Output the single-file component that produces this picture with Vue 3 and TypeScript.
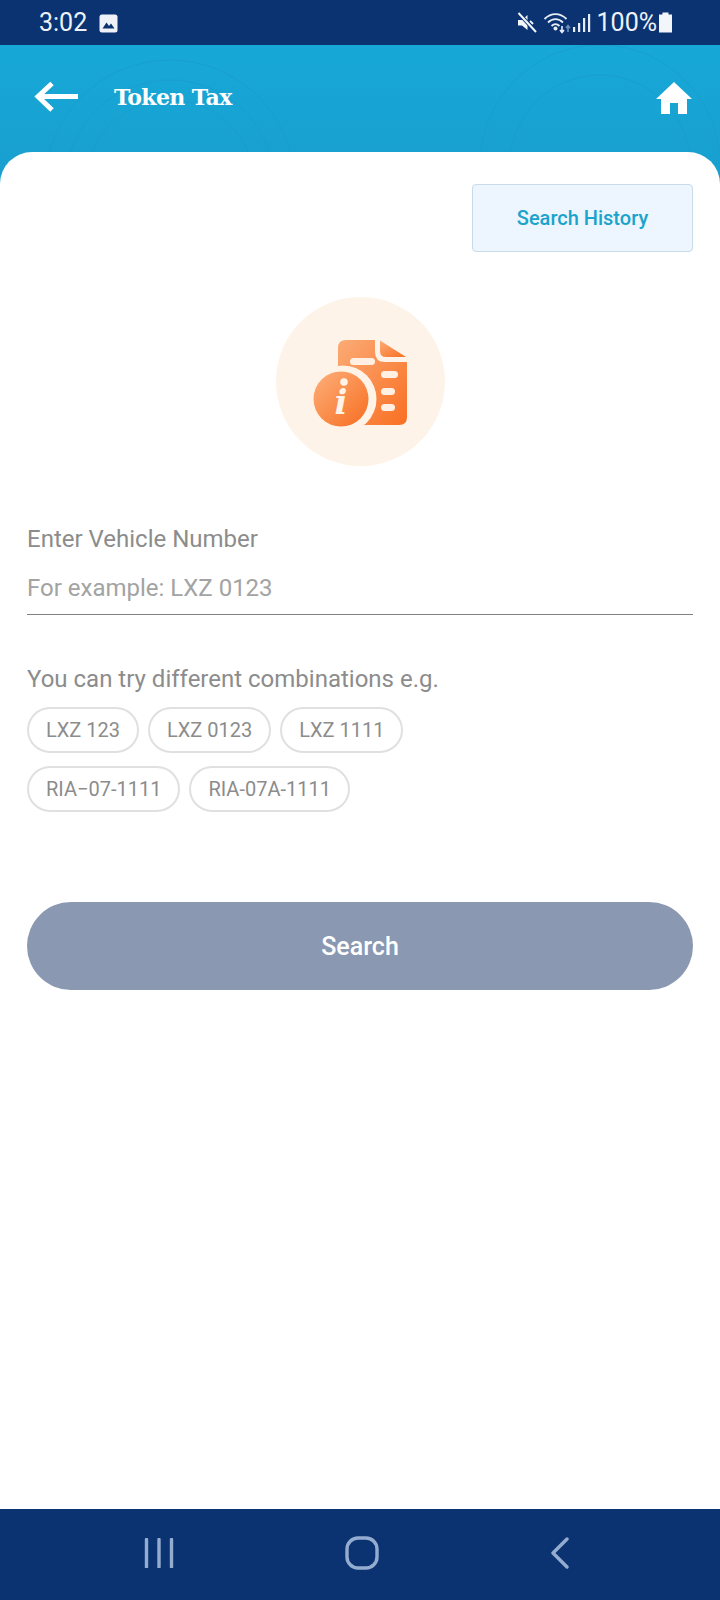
<script setup lang="ts">
const chipRows: string[][] = [
  ['LXZ 123', 'LXZ 0123', 'LXZ 1111'],
  ['RIA−07-1111', 'RIA-07A-1111'],
]
</script>

<template>
  <div class="screen">
    <div class="status">
      <div class="status-left">
        <span class="time">3:02</span>
        <svg class="pic" width="19" height="19" viewBox="0 0 19 19">
          <rect x="0.5" y="0.5" width="18" height="18" rx="2.5" fill="#eef2f8" />
          <path d="M3.5 14.5 L7.5 8.5 L10 12 L12 9.5 L15.5 14.5 Z" fill="#0b3372" />
        </svg>
      </div>
      <div class="status-right">
        <svg width="22" height="22" viewBox="0 0 22 22">
          <path d="M2 8 H6 L11.5 3 V18 L6 13.5 H2 Z" fill="#f2f5fa" />
          <path d="M14 9 L17 12" stroke="#f2f5fa" stroke-width="2" />
          <path d="M3 1.5 L20 20" stroke="#0b3372" stroke-width="4" />
          <path d="M2.5 1 L20 20" stroke="#f2f5fa" stroke-width="2" />
        </svg>
        <svg class="wifi" width="30" height="24" viewBox="0 0 30 24">
          <g fill="none" stroke="#e8edf5" stroke-width="1.8">
            <path d="M1.5 8 C8 1.5 17 1.5 23.5 8" />
            <path d="M5 11.5 C9.5 7 15.5 7 20 11.5" />
            <path d="M8.5 15 C11 12.5 14 12.5 16.5 15" />
          </g>
          <circle cx="12.5" cy="17.5" r="2" fill="#e8edf5" />
          <path d="M19 15 V21 M17 19 L19 21.5 L21 19" stroke="#e8edf5" stroke-width="1.6" fill="none" />
          <path d="M25 21 V15 M23 17 L25 14.5 L27 17" stroke="#6f8db8" stroke-width="1.6" fill="none" />
        </svg>
        <svg class="signal" width="20" height="22" viewBox="0 0 20 22">
          <rect x="1" y="15" width="2.2" height="5" fill="#e8edf5" />
          <rect x="6" y="11" width="2.2" height="9" fill="#e8edf5" />
          <rect x="11" y="6" width="2.2" height="14" fill="#e8edf5" />
          <rect x="16" y="2" width="2.2" height="18" fill="#e8edf5" />
        </svg>
        <span class="pct">100%</span>
        <svg class="batt" width="15" height="21" viewBox="0 0 15 21">
          <path d="M4.5 0.5 H10.5 V2.5 H14 V20.5 H1 V2.5 H4.5 Z" fill="#f2f5fa" />
        </svg>
      </div>
    </div>

    <header class="header">
      <svg class="bg-lines" width="720" height="107" viewBox="0 0 720 107">
        <g fill="none" stroke="#1b9ccb" stroke-width="1" opacity="0.7">
          <circle cx="170" cy="140" r="85" />
          <circle cx="170" cy="140" r="105" />
          <circle cx="170" cy="140" r="125" />
          <circle cx="600" cy="120" r="90" />
          <circle cx="600" cy="120" r="120" />
        </g>
      </svg>
      <div class="head-left">
        <svg class="back" width="46" height="32" viewBox="0 0 46 32">
          <path d="M44 15.5 H5 M18 2.5 L4 15.5 L18 29" fill="none" stroke="#fff" stroke-width="5" />
        </svg>
        <span class="title">Token Tax</span>
      </div>
      <svg class="home" width="38" height="34" viewBox="0 0 38 34">
        <path d="M19 1 L37 18 H32 V33 H23 V22 H15 V33 H6 V18 H1 Z" fill="#fff" />
      </svg>
    </header>

    <main class="card">
      <div class="history-row">
        <button class="history">Search History</button>
      </div>

      <div class="badge-wrap">
        <div class="badge">
          <svg width="100" height="100" viewBox="0 0 100 100">
            <defs>
              <linearGradient id="docGrad" x1="0" y1="0" x2="1" y2="1">
                <stop offset="0" stop-color="#fbab76" />
                <stop offset="1" stop-color="#f96f22" />
              </linearGradient>
              <linearGradient id="coinGrad" x1="0" y1="0" x2="1" y2="1">
                <stop offset="0" stop-color="#fdb07b" />
                <stop offset="1" stop-color="#f76d20" />
              </linearGradient>
            </defs>
            <path d="M28 16 Q28 8 36 8 H65 V20 Q65 30 75 30 H97 V85 Q97 93 89 93 H40 L28 60 Z" fill="url(#docGrad)" />
            <path d="M70 8.5 L96 25 H76 Q70 25 70 19 Z" fill="url(#docGrad)" />
            <rect x="40" y="26" width="25" height="7" rx="3.5" fill="#fff0e3" />
            <rect x="71" y="39" width="17" height="7" rx="3.5" fill="#fff0e3" />
            <rect x="71" y="56" width="14" height="7" rx="3.5" fill="#fff0e3" />
            <rect x="71" y="72" width="14" height="7" rx="3.5" fill="#fff0e3" />
            <circle cx="33" cy="67" r="33.5" fill="#fff3e7" />
            <circle cx="31" cy="67" r="27.5" fill="url(#coinGrad)" />
            <circle cx="34" cy="50" r="3.8" fill="#fff3e7" />
            <text x="31" y="82" class="info-i">i</text>
          </svg>
        </div>
      </div>

      <label class="field-label">Enter Vehicle Number</label>
      <div class="placeholder">For example: LXZ 0123</div>

      <p class="hint">You can try different combinations e.g.</p>
      <div class="chips">
        <div v-for="(row, r) in chipRows" :key="r" class="chip-row">
          <span v-for="chip in row" :key="chip" class="chip">{{ chip }}</span>
        </div>
      </div>

      <button class="search">Search</button>
    </main>

    <nav class="nav">
      <svg width="30" height="30" viewBox="0 0 30 30">
        <path d="M2.5 1.5 V29 M15 1.5 V29 M27.5 1.5 V29" stroke="#94acd0" stroke-width="3.4" stroke-linecap="round" fill="none" />
      </svg>
      <svg width="34" height="34" viewBox="0 0 34 34">
        <rect x="2" y="2" width="30" height="30" rx="11" fill="none" stroke="#94acd0" stroke-width="3.4" />
      </svg>
      <svg width="20" height="32" viewBox="0 0 20 32">
        <path d="M17 2 L3 16 L17 30" fill="none" stroke="#94acd0" stroke-width="3.4" stroke-linecap="round" stroke-linejoin="round" />
      </svg>
    </nav>
  </div>
</template>

<style>
html, body { margin: 0; padding: 0; background: #fff; }
</style>

<style scoped>
.screen {
  width: 720px;
  height: 1600px;
  display: flex;
  flex-direction: column;
  background: #fff;
  overflow: hidden;
  font-family: Roboto, sans-serif;
}
.status {
  height: 45px;
  flex: none;
  background: #0b3372;
  color: #eef2f8;
  display: flex;
  justify-content: space-between;
  align-items: center;
  padding: 0 47px 0 39px;
  box-sizing: border-box;
}
.status-left { display: flex; align-items: center; gap: 12px; }
.time { font-size: 25px; }
.pic { margin-top: 1px; }
.status-right { display: flex; align-items: center; }
.wifi { margin-left: 5px; }
.signal { margin-left: -1px; }
.pct { font-size: 25px; margin-left: 5px; }
.batt { margin-left: 1px; }
.header {
  position: relative;
  height: 139px;
  flex: none;
  background: linear-gradient(180deg, #17a8d8 0%, #189fce 100%);
  display: flex;
  justify-content: space-between;
  align-items: flex-start;
  padding: 36px 27px 0 34px;
  box-sizing: border-box;
}
.bg-lines { position: absolute; left: 0; top: 0; }
.head-left { position: relative; display: flex; align-items: center; gap: 34px; }
.title {
  font-family: "DejaVu Serif", serif;
  font-weight: 700;
  font-size: 22px;
  color: #fff;
  letter-spacing: -0.6px;
}
.home { position: relative; margin-top: 0; }
.card {
  position: relative;
  flex: 1;
  margin-top: -32px;
  background: #fff;
  border-radius: 32px 32px 0 0;
  padding: 32px 27px 0;
  box-sizing: border-box;
}
.history-row { display: flex; justify-content: flex-end; }
.history {
  width: 221px;
  height: 68px;
  box-sizing: border-box;
  background: #edf6fe;
  border: 1px solid #c9dbe8;
  border-radius: 4px;
  color: #1ba3cc;
  font-family: Roboto, sans-serif;
  font-weight: 500;
  font-size: 20px;
  padding: 0;
}
.badge-wrap { display: flex; justify-content: center; margin-top: 45px; }
.badge {
  width: 169px;
  height: 169px;
  border-radius: 50%;
  background: #fef3e8;
  display: flex;
  align-items: center;
  justify-content: center;
}
.info-i {
  font-family: "DejaVu Serif", serif;
  font-style: italic;
  font-weight: 700;
  font-size: 34px;
  fill: #fff3e7;
  text-anchor: middle;
}
.field-label {
  display: block;
  margin-top: 58px;
  font-size: 24px;
  line-height: 30px;
  color: #8c8c8c;
}
.placeholder {
  margin-top: 19px;
  height: 41px;
  font-size: 24px;
  line-height: 30px;
  color: #a3a3a3;
  border-bottom: 1px solid #808080;
}
.hint {
  margin: 49px 0 0;
  font-size: 24px;
  line-height: 30px;
  color: #8c8c8c;
}
.chips { display: flex; flex-direction: column; gap: 13px; margin-top: 13px; }
.chip-row { display: flex; gap: 9px; }
.chip {
  height: 46px;
  box-sizing: border-box;
  padding: 0 17px;
  display: flex;
  align-items: center;
  border: 2px solid #e0e0e0;
  border-radius: 23px;
  font-size: 20px;
  color: #8c8c8c;
}
.search {
  display: block;
  width: 100%;
  height: 88px;
  margin-top: 90px;
  border: 0;
  border-radius: 44px;
  background: #8a98b1;
  color: #fff;
  font-family: Roboto, sans-serif;
  font-weight: 500;
  font-size: 25px;
}
.nav {
  height: 91px;
  flex: none;
  background: #0b3372;
  display: flex;
  align-items: center;
  box-sizing: border-box;
  padding: 0 150px 3px 144px;
  justify-content: space-between;
}
</style>
